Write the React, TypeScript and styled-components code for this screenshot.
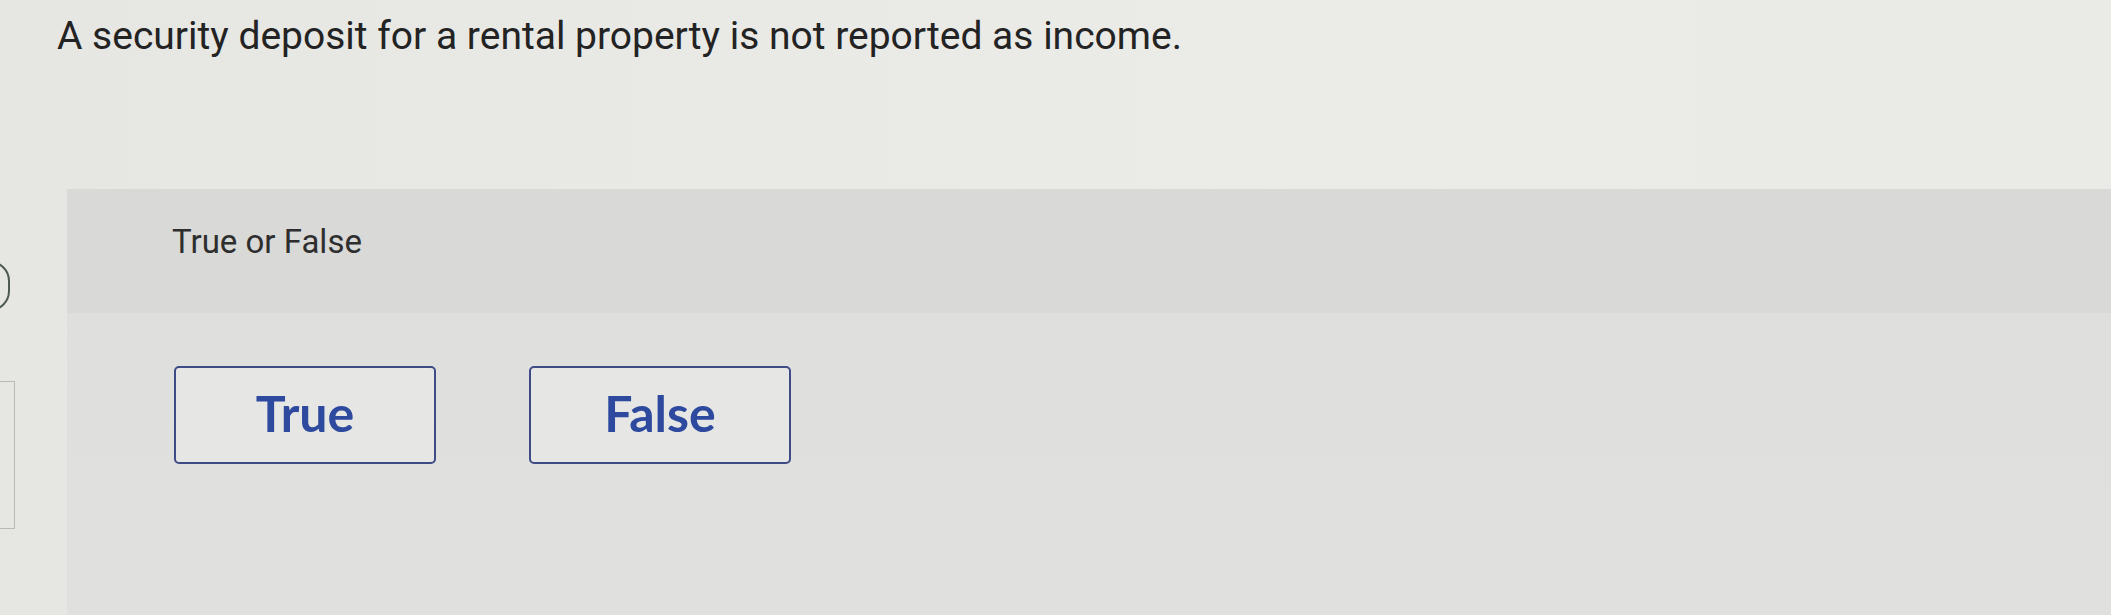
import styled, { createGlobalStyle } from "styled-components";

const GlobalStyle = createGlobalStyle`
  html, body {
    margin: 0;
    padding: 0;
    background: #e9e9e6;
  }
`;

const Page = styled.div`
  width: 2111px;
  height: 615px;
  overflow: hidden;
  display: flex;
  flex-direction: column;
  background: linear-gradient(90deg, #e6e6e3 0%, #ebebe8 60%, #eaeae6 100%);
  font-family: Roboto, "Liberation Sans", Arial, sans-serif;
`;

const Question = styled.h1`
  margin: 0;
  padding: 12px 0 0 57px;
  height: 189px;
  box-sizing: border-box;
  font-size: 39px;
  font-weight: 400;
  line-height: 48px;
  color: #232323;
`;

const Body = styled.div`
  flex: 1;
  display: flex;
`;

const Sidebar = styled.div`
  width: 67px;
  flex-shrink: 0;
  display: flex;
  flex-direction: column;
`;

const StepBubble = styled.div`
  width: 40px;
  height: 46px;
  margin: 72px 0 0 -34px;
  border: 2px solid #4d5a4f;
  border-radius: 20px;
`;

const SideBox = styled.div`
  width: 14px;
  height: 146px;
  margin-top: 70px;
  border: 1.5px solid #b9b9b6;
  border-left: none;
`;

const Panel = styled.section`
  flex: 1;
  display: flex;
  flex-direction: column;
`;

const PanelHeader = styled.div`
  height: 124px;
  box-sizing: border-box;
  padding: 33px 0 0 105px;
  background: #d9d9d7;
  font-size: 33px;
  color: #2e2e2e;
`;

const PanelBody = styled.div`
  flex: 1;
  display: flex;
  gap: 93px;
  padding: 53px 0 0 107px;
  background: linear-gradient(180deg, #dfdfdd 0%, #e0e0de 100%);
`;

const ChoiceButton = styled.button`
  width: 262px;
  height: 98px;
  box-sizing: border-box;
  padding: 0 0 4px;
  border: 2px solid #3f4b86;
  border-radius: 5px;
  background: #e6e6e4;
  color: #2d4a9e;
  font-family: Lato, Roboto, "Liberation Sans", sans-serif;
  font-size: 50px;
  font-weight: 700;
  cursor: pointer;
`;

const choices = ["True", "False"];

export default function App() {
  return (
    <>
      <GlobalStyle />
      <Page>
        <Question>
          A security deposit for a rental property is not reported as income.
        </Question>
        <Body>
          <Sidebar>
            <StepBubble />
            <SideBox />
          </Sidebar>
          <Panel>
            <PanelHeader>True or False</PanelHeader>
            <PanelBody>
              {choices.map((choice) => (
                <ChoiceButton key={choice}>{choice}</ChoiceButton>
              ))}
            </PanelBody>
          </Panel>
        </Body>
      </Page>
    </>
  );
}
